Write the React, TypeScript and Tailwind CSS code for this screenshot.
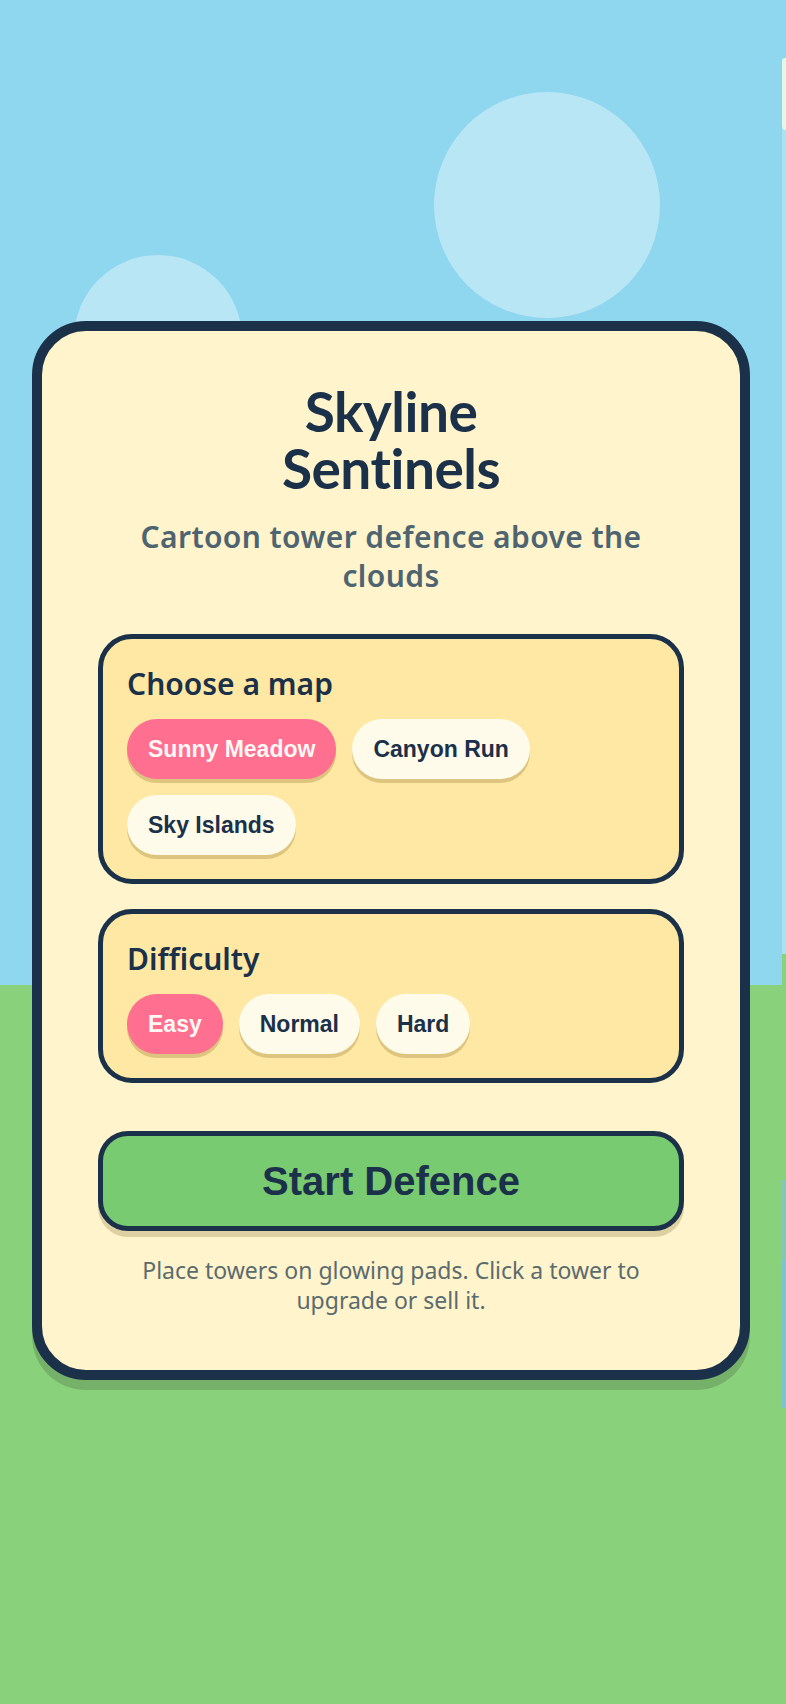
import React, { useState } from "react";

const maps = ["Sunny Meadow", "Canyon Run", "Sky Islands"];
const levels = ["Easy", "Normal", "Hard"];

function Chip({
  label,
  active,
  onClick,
}: {
  label: string;
  active: boolean;
  onClick: () => void;
}) {
  return (
    <button
      type="button"
      onClick={onClick}
      className={
        "rounded-full px-[21px] py-4 text-[23px] leading-[28px] font-bold shadow-[0_4px_0_rgba(120,90,20,0.25)] " +
        (active ? "bg-[#ff6f8f] text-[#fff8f4]" : "bg-[#fffbea] text-[#1b3049]")
      }
      style={{ fontFamily: '"Liberation Sans", Arial, sans-serif' }}
    >
      {label}
    </button>
  );
}

function Section({
  title,
  children,
}: {
  title: string;
  children: React.ReactNode;
}) {
  return (
    <div className="rounded-[34px] border-[5px] border-[#1b3049] bg-[#ffe8a3] px-6 pt-[27px] pb-6">
      <h2
        className="mb-[17px] text-[30px] leading-[36px] font-semibold text-[#1b3049]"
        style={{ fontFamily: '"Noto Sans", sans-serif' }}
      >
        {title}
      </h2>
      <div className="flex flex-wrap gap-4">{children}</div>
    </div>
  );
}

export default function App() {
  const [map, setMap] = useState("Sunny Meadow");
  const [level, setLevel] = useState("Easy");

  return (
    <div className="relative h-[1704px] w-full overflow-hidden bg-[#8fd6ef]">
      {/* game scene behind the menu */}
      <div className="absolute left-0 right-0 top-[985px] bottom-0 bg-[#8ad17b]" />
      <div className="absolute left-[434px] top-[92px] h-[226px] w-[226px] rounded-full bg-[#b9e6f5]" />
      <div className="absolute left-[74px] top-[255px] h-[168px] w-[168px] rounded-full bg-[#b9e6f5]" />
      <div className="absolute left-[782px] top-[58px] h-[896px] w-[4px] bg-[#a9e3f0]" />
      <div className="absolute left-[782px] top-[58px] h-[72px] w-[8px] rounded-l-[4px] bg-[#e6f5e6]" />
      <div className="absolute left-[782px] top-[954px] h-[31px] w-[4px] bg-[#8ad17b]" />
      <div className="absolute left-[782px] top-[1180px] h-[80px] w-[4px] bg-[#86c6b6]" />
      <div className="absolute left-[782px] top-[1260px] h-[148px] w-[4px] bg-[#7ec3cf]" />

      {/* start menu */}
      <div className="relative z-10 pl-[32px] pt-[321px]">
        <div className="flex w-[718px] flex-col rounded-[54px] border-[10px] border-[#1b3049] bg-[#fff4cb] px-14 pt-[52px] pb-[55px] shadow-[0_10px_0_rgba(0,0,0,0.15)]">
          <h1
            className="flex flex-col items-center text-[55px] leading-[57px] font-bold text-[#1b3049] tracking-[-0.5px]"
            style={{ fontFamily: 'Lato, "Noto Sans", sans-serif' }}
          >
            <span>Skyline</span>
            <span>Sentinels</span>
          </h1>
          <p
            className="mt-5 text-center text-[30px] leading-[39px] font-semibold tracking-[0.4px] text-[#4e6470]"
            style={{ fontFamily: '"Noto Sans", sans-serif' }}
          >
            Cartoon tower defence above the clouds
          </p>

          <div className="mt-[39px] flex flex-col gap-[25px]">
            <Section title="Choose a map">
              {maps.map((m) => (
                <Chip key={m} label={m} active={map === m} onClick={() => setMap(m)} />
              ))}
            </Section>
            <Section title="Difficulty">
              {levels.map((l) => (
                <Chip key={l} label={l} active={level === l} onClick={() => setLevel(l)} />
              ))}
            </Section>
          </div>

          <button
            type="button"
            className="mt-12 h-[100px] w-full rounded-[30px] border-[5px] border-[#1b3049] bg-[#79cb72] text-[40px] font-bold text-[#1b3049] shadow-[0_6px_0_rgba(120,100,40,0.25)]"
            style={{ fontFamily: '"Liberation Sans", Arial, sans-serif' }}
          >
            Start Defence
          </button>

          <p
            className="mx-auto mt-6 max-w-[520px] text-center text-[23px] leading-[30px] text-[#5b6b6e]"
            style={{ fontFamily: '"Noto Sans", sans-serif' }}
          >
            Place towers on glowing pads. Click a tower to upgrade or sell it.
          </p>
        </div>
      </div>
    </div>
  );
}
